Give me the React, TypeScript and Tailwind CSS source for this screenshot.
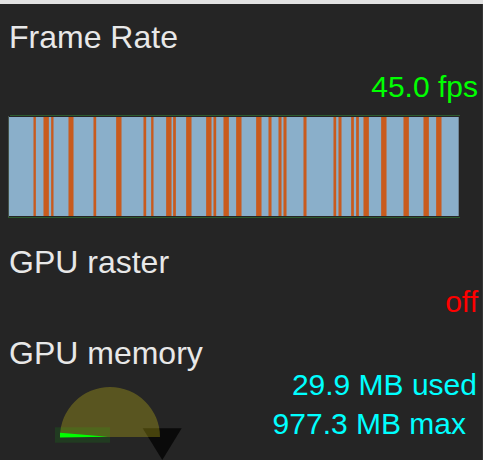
import React from "react";

const bars: [number, number][] = [
  [33.33, 36], [43.33, 49], [51, 53.67], [68.33, 73.67], [93.33, 96.33],
  [116, 121.67], [143.33, 146.33], [151, 153.67], [166, 171.67], [173, 176],
  [186, 191.67], [206, 211.67], [213.33, 216.33], [223.33, 229], [236, 241.67],
  [256, 261.67], [268.33, 271.67], [278.33, 281.67], [283.33, 286.67], [303.33, 306.67],
  [333.33, 336.33], [338.33, 341.67], [351, 354], [356, 359], [363.33, 369],
  [381, 386.67], [403.33, 409], [423.33, 429], [436, 441.67],
];

function Graph() {
  return (
    <svg width={452} height={103} viewBox="0 0 452 103" className="block">
      <rect x={2} y={0} width={450} height={1} fill="#2c5a2c" />
      <rect x={0} y={1} width={1} height={101} fill="#44524a" />
      <rect x={1} y={2} width={449} height={99} fill="#8aafca" />
      <rect x={450} y={2} width={1} height={99} fill="#6f8595" />
      {bars.map(([s, e], i) => (
        <rect key={i} x={s - 8 + 0.15} y={2} width={e - s - 0.3} height={99} fill="#c85b1e" />
      ))}
      <rect x={0} y={102} width={452} height={1} fill="#2c5a2c" />
    </svg>
  );
}

function Gauge() {
  return (
    <svg width={190} height={90} viewBox="0 0 190 90" className="block shrink-0">
      <polygon points="142.7,58.3 181.7,58.3 162.3,90" fill="#0a0a0a" />
      <path d="M60,67 A50,50 0 0 1 160,67 Z" fill="rgb(240,225,20)" fillOpacity={0.26} />
      <rect x={55} y={57.3} width={55} height={15.4} fill="rgb(0,255,0)" fillOpacity={0.1} />
      <polygon points="60,62.7 108,66.7 60,67.5" fill="#00ff00" />
    </svg>
  );
}

export default function App() {
  const font = { fontFamily: '"Liberation Sans", Arial, sans-serif' };
  return (
    <div className="w-[483px] h-[460px] overflow-hidden bg-[#252525] flex flex-col" style={font}>
      <div className="h-[4px] bg-[#e2e2e2] shrink-0" />
      <div className="flex flex-col pt-[17px] border-r border-[#343434] flex-1">
        <div className="h-[32px] leading-[32px] text-[32px] pl-[9px] text-[#e8e8e8]">Frame Rate</div>
        <div className="mt-[19px] h-[30px] leading-[30px] text-[30px] text-right pr-[4px] text-[#00ff00]">45.0 fps</div>
        <div className="mt-[13px] ml-[8px]">
          <Graph />
        </div>
        <div className="mt-[28px] h-[32px] leading-[32px] text-[32px] pl-[9px] text-[#e8e8e8]">GPU raster</div>
        <div className="mt-[9px] h-[30px] leading-[30px] text-[30px] text-right pr-[4px] text-[#ff0000]">off</div>
        <div className="mt-[20px] h-[32px] leading-[32px] text-[32px] pl-[9px] text-[#e8e8e8]">GPU memory</div>
        <div className="mt-[1px] flex h-[90px]">
          <Gauge />
          <div className="flex-1 flex flex-col text-[#00ffff] text-[30px] leading-[30px]">
            <div className="h-[30px] text-right pr-[5px] whitespace-nowrap">29.9 MB used</div>
            <div className="mt-[9px] h-[30px] text-right pr-[16px] whitespace-nowrap">977.3 MB max</div>
          </div>
        </div>
      </div>
    </div>
  );
}
